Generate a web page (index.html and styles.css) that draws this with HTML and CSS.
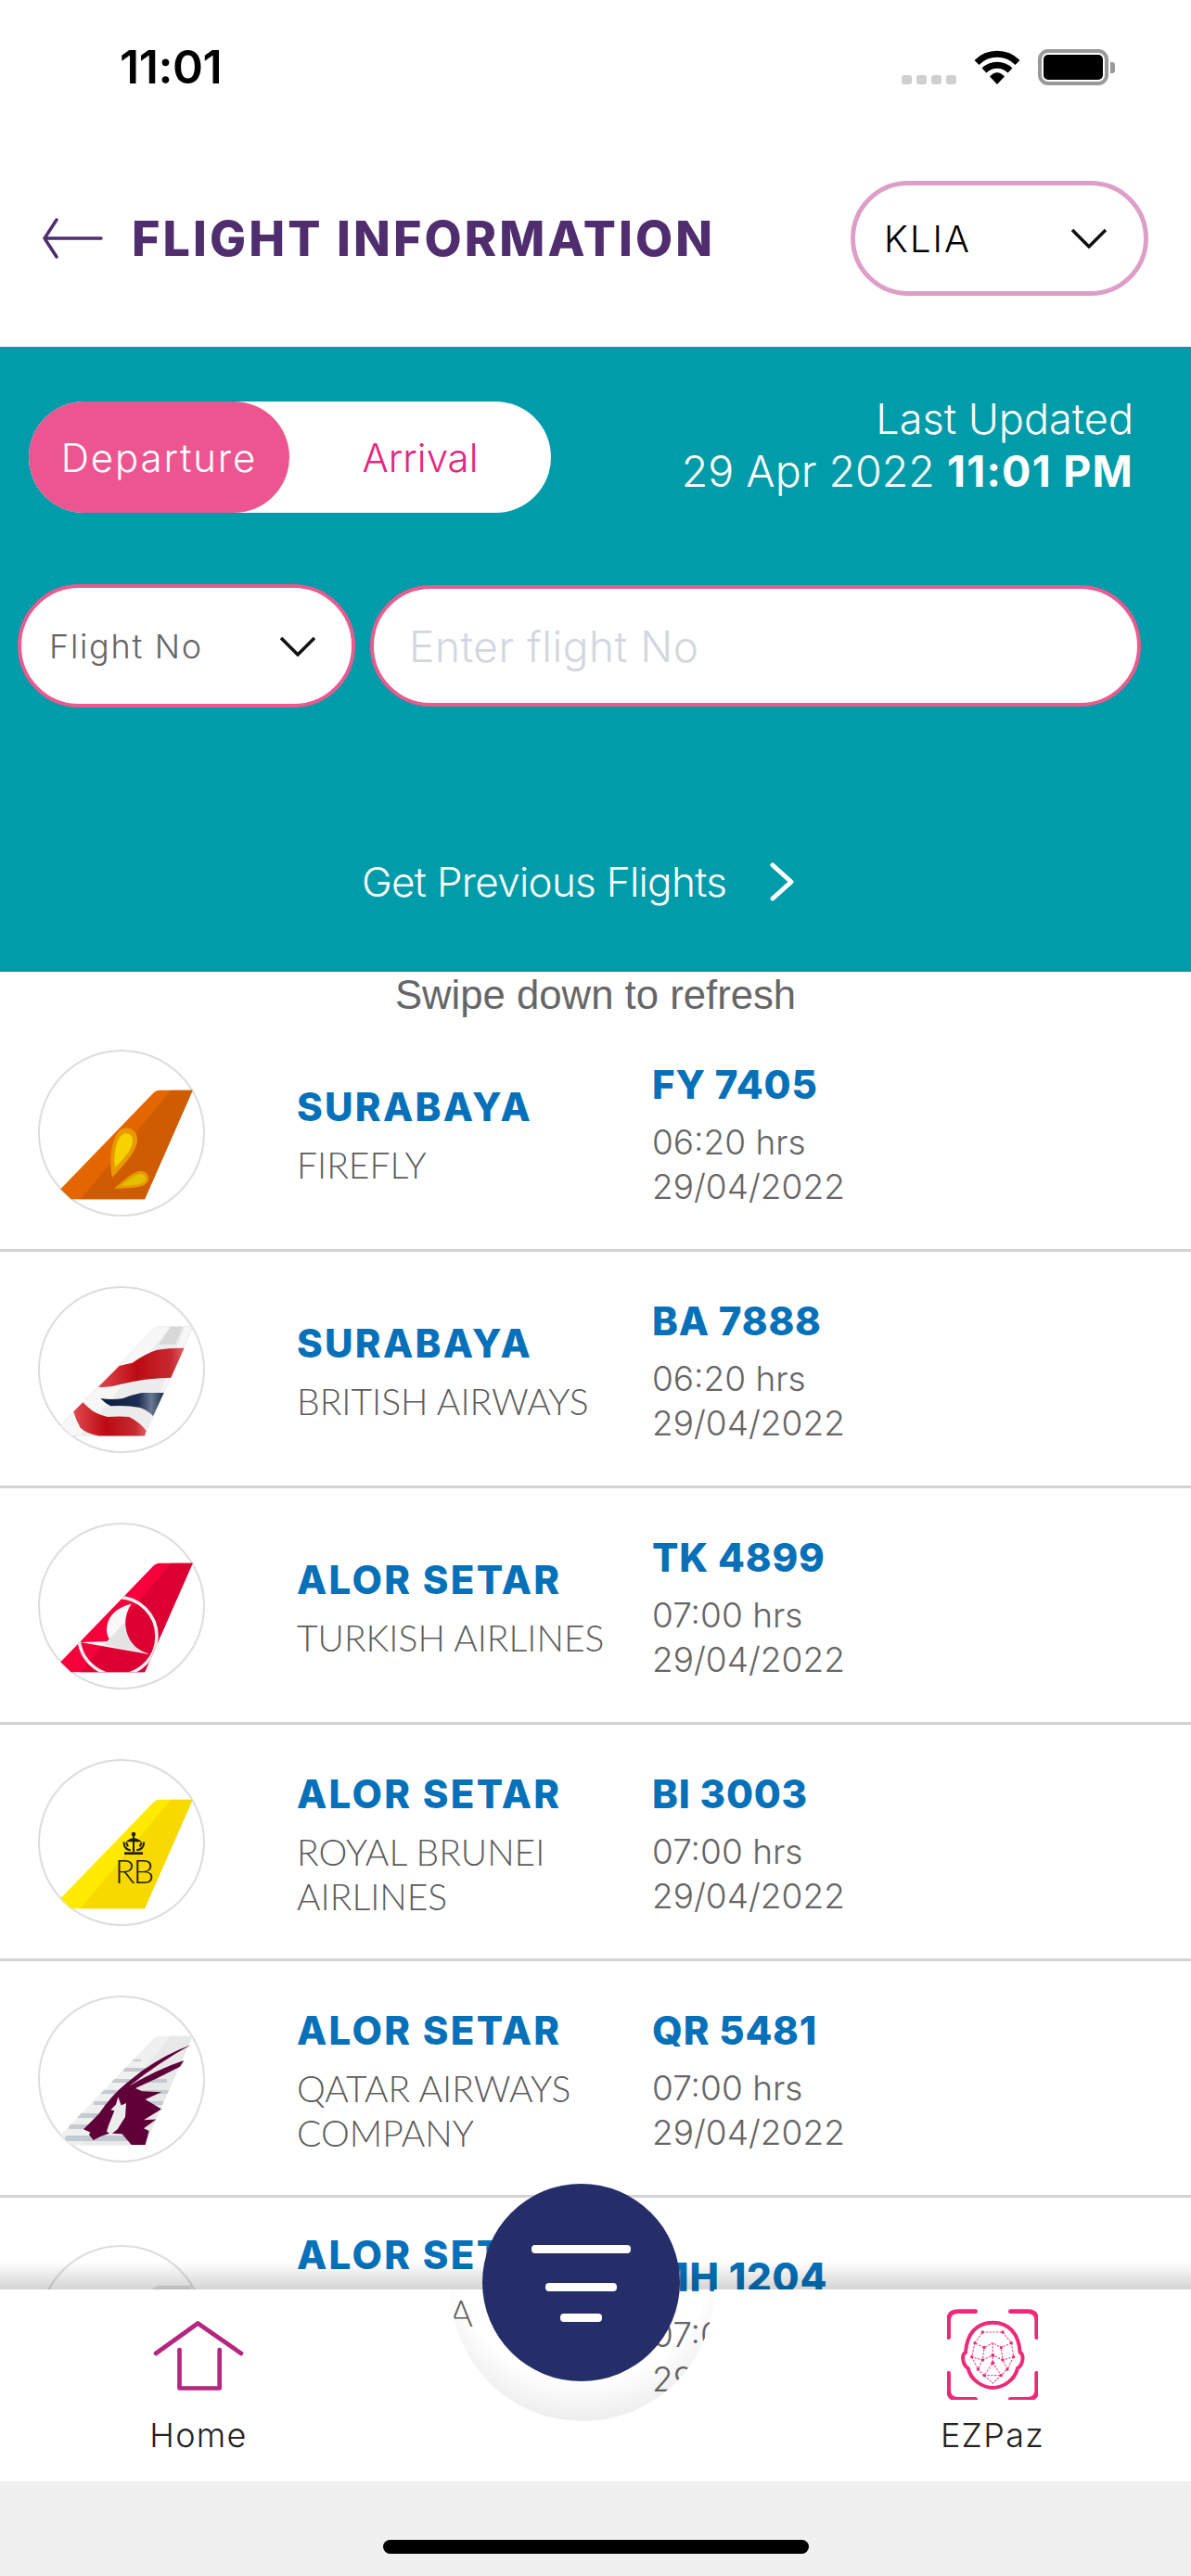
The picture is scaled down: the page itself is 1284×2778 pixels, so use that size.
FILE: index.html
```html
<!DOCTYPE html>
<html lang="en">
<head>
<meta charset="utf-8">
<title>Flight Information</title>
<link rel="stylesheet" href="styles.css">
</head>
<body>
<div class="app">
  <div class="status">
    <span class="clock">11:01</span>
    <div class="status-icons">
      <div class="signal"><i></i><i></i><i></i><i></i></div>
      <svg class="wifi" viewBox="0 0 50 38"><path d="M3 14.500A31 31 0 0 1 47 14.500" fill="none" stroke="#000" stroke-width="7"/><path d="M11 23A20 20 0 0 1 39 23" fill="none" stroke="#000" stroke-width="7"/><path d="M17 29.500Q25 21 33 29.500L25 38Z" fill="#000"/></svg>
      <div class="battery"><div class="battery-fill"></div></div>
    </div>
  </div>

  <header class="header">
    <svg class="back" viewBox="0 0 66 44"><path d="M64 22H3M16 2L3 22L16 42" fill="none" stroke="#4f2d6f" stroke-width="3.500" stroke-linecap="round" stroke-linejoin="round"/></svg>
    <h1 class="title">FLIGHT INFORMATION</h1>
    <div class="airport">
      <span>KLIA</span>
      <svg class="chev" viewBox="0 0 40 22"><path d="M2 2L20 20L38 2" fill="none" stroke="#111" stroke-width="3.500"/></svg>
    </div>
  </header>

  <section class="panel">
    <div class="panel-top">
      <div class="toggle">
        <div class="toggle-on">Departure</div>
        <div class="toggle-off">Arrival</div>
      </div>
      <div class="updated">
        <div>Last Updated</div>
        <div class="updated-date">29 Apr 2022 <b>11:01 PM</b></div>
      </div>
    </div>
    <div class="search">
      <div class="search-type">
        <span>Flight No</span>
        <svg class="chev-small" viewBox="0 0 40 22"><path d="M2 2L20 20L38 2" fill="none" stroke="#111" stroke-width="3.500"/></svg>
      </div>
      <div class="search-input">Enter flight No</div>
    </div>
    <div class="previous">
      <span>Get Previous Flights</span>
      <svg class="prev-chev" viewBox="0 0 28 42"><path d="M4 3L24 21L4 39" fill="none" stroke="#fff" stroke-width="5" stroke-linecap="round" stroke-linejoin="round"/></svg>
    </div>
  </section>

  <main class="list">
    <div class="swipe">Swipe down to refresh</div>

    <div class="row">
      <div class="logo">
        <svg viewBox="0 0 180 180">
          <path d="M24.300 149.300L125 45Q128 42.700 131 42.700H166.700L115 160.300H35.700Z" fill="#e36600"/>
          <path d="M143.300 42.700H166.700L115 160.300H45.700Z" fill="#cf5c00"/>
          <path d="M80 137C76 115 80 96 87 87C94 80 108 84 107 97C106 110 91 125 80 137Z" fill="#e89a00"/>
          <path d="M83 126C81 112 84 98 90 91C95 87 103 90 102 98C101 108 91 118 83 126Z" fill="#f5d200"/>
          <path d="M82 149C92 140 102 131 110 130C118 129 121 137 118 142C112 149 95 148 82 149Z" fill="#e89a00"/>
          <path d="M89 146C97 140 104 134 110 133C116 133 117 138 115 141C110 146 98 145 89 146Z" fill="#e2c000"/>
        </svg>
      </div>
      <div class="col-a"><div class="place">SURABAYA</div><div class="airline">FIREFLY</div></div>
      <div class="col-b"><div class="place">FY 7405</div><div class="detail">06:20 hrs</div><div class="detail">29/04/2022</div></div>
    </div>

    <div class="row">
      <div class="logo">
        <svg viewBox="0 0 180 180">
          <defs>
            <linearGradient id="baRed" x1="0" y1="0" x2="1" y2="0"><stop offset="0" stop-color="#e04a50"/><stop offset=".45" stop-color="#bd0a12"/><stop offset=".85" stop-color="#c52a30"/><stop offset="1" stop-color="#e06066"/></linearGradient>
            <linearGradient id="baBlue" x1="0" y1="0" x2="1" y2="0"><stop offset="0" stop-color="#0c1c3c"/><stop offset=".6" stop-color="#1c2e52"/><stop offset=".8" stop-color="#6a7890"/><stop offset="1" stop-color="#1c2e52"/></linearGradient>
          </defs>
          <path d="M24.300 149.300L125 45Q128 42.700 131 42.700H166.700L115 160.300H35.700Z" fill="#f7f7f7" stroke="#ddd" stroke-width=".6"/>
          <path d="M143.300 42.700H158L115 160.300H45.700Z" fill="#ececec"/>
          <path d="M143 42.700H156L148 62H130Z" fill="#d8d8d8"/>
          <path d="M65 107.700L87.700 85Q95 83 101.700 81.700Q115 72 128.300 67.700Q142 65.500 157.700 65.700L143.300 97.700Q128 98 115 99.700Q100 102 88.300 105Q76 109 65 107.700Z" fill="url(#baRed)"/>
          <path d="M67.300 120Q80 122 91.700 120Q102 116 111.700 114H135.700L124 139.300Q120 134 110 130Q95 127 78.300 128.300Q72 125 67.300 120Z" fill="url(#baBlue)"/>
          <path d="M38.300 134.300L48.300 124.300Q54 130 58.300 133.300Q66 138 75 140Q88 139 98.300 140Q110 146 116.700 155L115 160.500H65.700Q52 158 45.700 151.700Q41 144 38.300 134.300Z" fill="url(#baRed)"/>
        </svg>
      </div>
      <div class="col-a"><div class="place">SURABAYA</div><div class="airline">BRITISH AIRWAYS</div></div>
      <div class="col-b"><div class="place">BA 7888</div><div class="detail">06:20 hrs</div><div class="detail">29/04/2022</div></div>
    </div>

    <div class="row">
      <div class="logo">
        <svg viewBox="0 0 180 180">
          <defs><clipPath id="tkClip"><path d="M24.300 149.300L125 45Q128 42.700 131 42.700H166.700L115 160.300H35.700Z"/></clipPath></defs>
          <path d="M24.300 149.300L125 45Q128 42.700 131 42.700H166.700L115 160.300H35.700Z" fill="#f5003a"/>
          <path d="M143.300 42.700H166.700L115 160.300H45.700Z" fill="#dc0033"/>
          <g clip-path="url(#tkClip)">
            <circle cx="86" cy="121.500" r="42" fill="none" stroke="#f0f0f0" stroke-width="3.500"/>
            <path d="M100.700 86.600Q74 94 74 115Q74 122 79 127L45.700 128L119.700 141Q95 133 94 110Q94 96 100.700 86.600Z" fill="#f8f8f8"/>
            <path d="M94 106L71 130.500L119.700 141Q95 133 94 106Z" fill="#e3e3e3"/>
          </g>
        </svg>
      </div>
      <div class="col-a"><div class="place">ALOR SETAR</div><div class="airline">TURKISH AIRLINES</div></div>
      <div class="col-b"><div class="place">TK 4899</div><div class="detail">07:00 hrs</div><div class="detail">29/04/2022</div></div>
    </div>

    <div class="row">
      <div class="logo">
        <svg viewBox="0 0 180 180">
          <path d="M24.300 149.300L125 45Q128 42.700 131 42.700H166.700L115 160.300H35.700Z" fill="#ffea00"/>
          <path d="M143.300 42.700H166.700L115 160.300H45.700Z" fill="#f7d900"/>
          <g transform="translate(69 54) scale(.3333)" fill="none" stroke="#221c00" stroke-width="6">
            <circle cx="102" cy="78" r="4" fill="#221c00"/>
            <path d="M102 78V135"/>
            <path d="M85 100Q102 86 120 100Z" fill="#221c00"/>
            <path d="M70 103Q72 128 92 130M136 103Q134 128 112 130"/>
            <path d="M78 105L84 118M128 105L122 118"/>
            <path d="M72 140H132" stroke-width="8"/>
          </g>
          <text class="rb" x="103" y="133" text-anchor="middle">RB</text>
        </svg>
      </div>
      <div class="col-a"><div class="place">ALOR SETAR</div><div class="airline">ROYAL BRUNEI<br>AIRLINES</div></div>
      <div class="col-b"><div class="place">BI 3003</div><div class="detail">07:00 hrs</div><div class="detail">29/04/2022</div></div>
    </div>

    <div class="row">
      <div class="logo">
        <svg viewBox="0 0 180 180">
          <defs><clipPath id="qrClip"><path d="M24.300 149.300L125 45Q128 42.700 131 42.700H166.700L115 160.300H35.700Z"/></clipPath></defs>
          <path d="M24.300 149.300L125 45Q128 42.700 131 42.700H166.700L115 160.300H35.700Z" fill="#f0f0f0"/>
          <path d="M143.300 42.700H166.700L115 160.300H45.700Z" fill="#e8e8e8"/>
          <g clip-path="url(#qrClip)" fill="#c3cad0">
            <rect x="102" y="68" width="9" height="2"/>
            <rect x="92" y="77" width="24" height="4"/>
            <rect x="79" y="89" width="60" height="4"/>
            <rect x="67" y="101" width="75" height="4"/>
            <rect x="60" y="113" width="75" height="4"/>
            <rect x="43" y="126" width="50" height="5"/>
            <rect x="33" y="138" width="50" height="5"/>
            <rect x="29" y="150" width="70" height="6" rx="3"/>
          </g>
          <g transform="translate(-1 -1.700) scale(.3333)">
            <path d="M497 162Q420 190 340 245L290 285Q240 325 200 385L150 435L172 445L168 452L182 470L205 458L235 448L275 450L305 485H350L362 440L345 432L385 403L345 405L402 370L350 338L402 315L340 312L318 302Q390 270 462 232L475 212Q390 240 298 295Q400 215 497 162Z" fill="#5f0038"/>
            <path d="M262 330L255 355L238 372L250 375L232 420L225 442L238 452L260 435L285 395L288 350L272 358Z" fill="#ececec"/>
          </g>
        </svg>
      </div>
      <div class="col-a"><div class="place">ALOR SETAR</div><div class="airline">QATAR AIRWAYS<br>COMPANY</div></div>
      <div class="col-b"><div class="place">QR 5481</div><div class="detail">07:00 hrs</div><div class="detail">29/04/2022</div></div>
    </div>

    <div class="row">
      <div class="logo">
        <svg viewBox="0 0 180 180">
          <path d="M24.300 149.300L125 45Q128 42.700 131 42.700H166.700L115 160.300H35.700Z" fill="#e4e4e4"/>
        </svg>
      </div>
      <div class="col-a"><div class="place">ALOR SETAR</div><div class="airline">MALAYSIA<br>AIRLINES<br>BERHAD</div></div>
      <div class="col-b"><div class="place">MH 1204</div><div class="detail">07:00 hrs</div><div class="detail">29/04/2022</div></div>
    </div>
  </main>

  <nav class="bottom">
    <div class="bar-shadow"></div>
    <div class="bar">
      <div class="halo"></div>
      <div class="tab">
        <svg class="tab-icon home-icon" viewBox="0 0 98 78"><path d="M3 36L48.300 3.500L95 36" fill="none" stroke="#b5267f" stroke-width="4.700" stroke-linecap="round" stroke-linejoin="round"/><path d="M28.500 32V73.500H71.700V32" fill="none" stroke="#b5267f" stroke-width="4.700" stroke-linecap="round" stroke-linejoin="round"/></svg>
        <span>Home</span>
      </div>
      <div class="tab">
        <svg class="tab-icon" viewBox="30 30 294 294">
          <path d="M122 38H66Q35 38 35 66V122M235 38H290Q320 38 320 66V122M35 238V294Q35 322 66 322H122M320 238V294Q320 322 290 322H235" fill="none" stroke="#ec2a7a" stroke-width="14" stroke-linecap="round"/>
          <path d="M178 74C230 74 262 110 266 170C280 178 276 212 258 222C250 260 210 285 178 285C146 285 106 260 98 222C80 212 76 178 90 170C94 110 126 74 178 74Z" fill="none" stroke="#ec2a7a" stroke-width="12"/>
          <path d="M145 105H210L238 140L205 155L178 140L150 155L120 140ZM120 140L110 185L145 195L150 155M238 140L245 185L210 195L205 155M178 140V205M145 195L178 180L210 195M145 195L130 225L150 245L178 205L205 245L225 225L210 195M150 245H205L178 270ZM110 185L130 225M245 185L225 225" fill="none" stroke="#ec2a7a" stroke-width="3.500" stroke-dasharray="7 4" opacity=".85"/>
          <g fill="#ec2a7a">
            <circle cx="145" cy="105" r="5"/><circle cx="210" cy="105" r="5"/><circle cx="120" cy="140" r="5"/><circle cx="238" cy="140" r="5"/><circle cx="150" cy="155" r="5"/><circle cx="205" cy="155" r="5"/><circle cx="178" cy="180" r="6"/><circle cx="110" cy="185" r="5"/><circle cx="245" cy="185" r="5"/><circle cx="145" cy="195" r="5"/><circle cx="210" cy="195" r="5"/><circle cx="178" cy="205" r="6"/><circle cx="130" cy="225" r="5"/><circle cx="225" cy="225" r="5"/><circle cx="150" cy="245" r="5"/><circle cx="205" cy="245" r="5"/>
          </g>
        </svg>
        <span>EZPaz</span>
      </div>
      <button class="fab" aria-label="Filter"><i class="f1"></i><i class="f2"></i><i class="f3"></i></button>
    </div>
    <div class="home-area"><div class="indicator"></div></div>
  </nav>
</div>
</body>
</html>
```
FILE: styles.css
```css
* { box-sizing: border-box; }
html, body { margin: 0; padding: 0; background: #fff; }
.app {
  position: relative;
  width: 1284px;
  height: 2778px;
  overflow: hidden;
  display: flex;
  flex-direction: column;
  font-family: "Inter", "Liberation Sans", sans-serif;
  font-weight: 300;
}

/* status bar */
.status { height: 134px; display: flex; justify-content: space-between; align-items: flex-start; padding: 43px 89px 0 129px; }
.clock { font: 600 50px/58px "Inter", sans-serif; letter-spacing: -0.400px; color: #000; }
.status-icons { display: flex; align-items: flex-start; padding-top: 10px; }
.signal { display: flex; gap: 5px; margin: 28px 19px 0 0; }
.signal i { display: block; width: 11px; height: 10px; border-radius: 3px; background: #cfcfcf; }
.wifi { width: 50px; height: 38px; margin-right: 19px; }
.battery { position: relative; width: 76px; height: 39px; border: 4px solid #999; border-radius: 11px; padding: 2px; }
.battery::after { content: ""; position: absolute; right: -11px; top: 10px; width: 5px; height: 12px; border-radius: 0 3px 3px 0; background: #999; }
.battery-fill { height: 100%; border-radius: 5px; background: #000; }

/* header */
.header { height: 240px; padding: 6px 46px 0 45px; display: flex; align-items: center; }
.back { width: 66px; height: 44px; flex: none; }
.title { margin: 2px 0 0 31px; font: 800 52px/60px "Inter", sans-serif; letter-spacing: 3.100px; color: #4f2d6f; white-space: nowrap; }
.airport { margin-left: auto; width: 321px; height: 124px; border: 5px solid #dd9ec8; border-radius: 62px; display: flex; align-items: center; justify-content: space-between; padding: 0 39px 0 31px; font-size: 40px; letter-spacing: 2px; color: #000; }
.chev { width: 40px; height: 22px; }

/* teal panel */
.panel { height: 674px; background: #009ca9; padding: 59px 62px 0 31px; color: #fff; }
.panel-top { display: flex; justify-content: space-between; align-items: flex-start; }
.toggle { width: 563px; height: 120px; border-radius: 60px; background: #fff; display: flex; font-size: 42px; }
.toggle-on { width: 281px; border-radius: 60px; background: #ec5590; color: #fff; display: flex; align-items: center; justify-content: center; letter-spacing: 1.800px; }
.toggle-off { flex: 1; color: #e5267f; display: flex; align-items: center; justify-content: center; }
.updated { text-align: right; font-size: 45px; line-height: 52px; margin-top: -7px; }
.updated-date { font-size: 46.500px; margin-top: 4px; white-space: nowrap; }
.updated-date b { font-weight: 700; letter-spacing: 1.200px; }
.search { display: flex; align-items: center; gap: 16px; margin: 77px -54px 0 -12px; }
.search-type { width: 364px; height: 133px; flex: none; background: #fff; border: 4px solid #ea5a8f; border-radius: 67px; display: flex; align-items: center; justify-content: space-between; padding: 0 38px 0 30px; font-size: 36px; letter-spacing: 1.700px; color: #666; }
.chev-small { width: 40px; height: 22px; }
.search-input { width: 831px; height: 131px; flex: none; background: #fff; border: 4px solid #ea5a8f; border-radius: 66px; display: flex; align-items: center; padding-left: 38px; font-size: 46px; letter-spacing: .5px; color: #d3d6e0; }
.previous { display: flex; align-items: center; margin: 161px 0 0 359px; font-size: 44px; letter-spacing: -.7px; }
.prev-chev { width: 28px; height: 42px; margin-left: 46px; }

/* list */
.list { flex: 1; min-height: 0; overflow: hidden; background: #fff; }
.swipe { height: 47px; text-align: center; font: 400 43.700px/49px "Liberation Sans", sans-serif; color: #666; }
.row { height: 255px; display: flex; align-items: center; padding: 2px 0 0 41px; border-bottom: 3px solid #d3d3d3; }
.row:last-child { height: 360px; align-items: flex-start; padding-top: 0; border-bottom: none; }
.logo { width: 180px; height: 180px; flex: none; border: 2px solid #ddd; border-radius: 50%; margin-right: 99px; position: relative; }
.logo svg { position: absolute; left: -2px; top: -1px; width: 180px; height: 180px; }
.rb { font: 300 36px "Lato", sans-serif; letter-spacing: -2px; fill: #221c00; }
.col-a { width: 382px; flex: none; padding-top: 5px; }
.col-b { flex: 1; padding-top: 5px; margin-left: 1px; }
.place { font: 800 42px/48px "Inter", sans-serif; color: #0670b8; margin-bottom: 14px; white-space: nowrap; }
.col-a .place { letter-spacing: 2.300px; }
.col-b .place { letter-spacing: .8px; }
.detail { font-size: 37px; line-height: 48px; color: #666; }
.airline { font: 300 39px/48px "Lato", sans-serif; color: #5c5c5c; }
.row:last-child .airline { letter-spacing: 1px; }
.row:last-child .logo { margin-top: 51px; }
.row:last-child .col-a { margin-top: 33px; }
.row:last-child .col-b { margin-top: 57px; }

/* bottom nav */
.bottom { position: absolute; left: 0; right: 0; bottom: 0; }
.bar-shadow { height: 30px; background: linear-gradient(to bottom, rgba(0,0,0,0), rgba(0,0,0,.17)); }
.bar { position: relative; height: 207px; display: flex; justify-content: space-between; padding: 21px 160px 0 160px; background: radial-gradient(circle 142px at 628px 0, rgba(255,255,255,0) 141.500px, #fff 142px); }
.halo { position: absolute; left: 486px; top: -142px; width: 284px; height: 284px; border-radius: 50%; clip-path: inset(50% 0 0 0); background: radial-gradient(circle at 50% 36%, rgba(0,0,0,0) 60%, rgba(0,0,0,.15) 100%); }
.tab { display: flex; flex-direction: column; align-items: center; font-size: 36px; letter-spacing: 1.300px; font-weight: 300; color: #222; width: 108px; position: relative; white-space: nowrap; }
.tab-icon { width: 98px; height: 98px; flex: none; margin-bottom: 16px; }
.home-icon { height: 78px; margin: 12px 0 24px; }
.fab { position: absolute; left: 520px; top: -114px; width: 213px; height: 213px; border: 0; padding: 0; border-radius: 50%; background: #252e69; display: block; }
.fab i { position: absolute; display: block; height: 9px; border-radius: 4px; background: #fff; }
.f1 { left: 53px; width: 107px; top: 66px; }
.f2 { left: 68px; width: 77px; top: 107px; }
.f3 { left: 84px; width: 45px; top: 140px; }
.home-area { height: 102px; background: #f0f0f0; display: flex; justify-content: center; padding-top: 63px; }
.indicator { width: 459px; height: 15px; border-radius: 8px; background: #000; }
```
